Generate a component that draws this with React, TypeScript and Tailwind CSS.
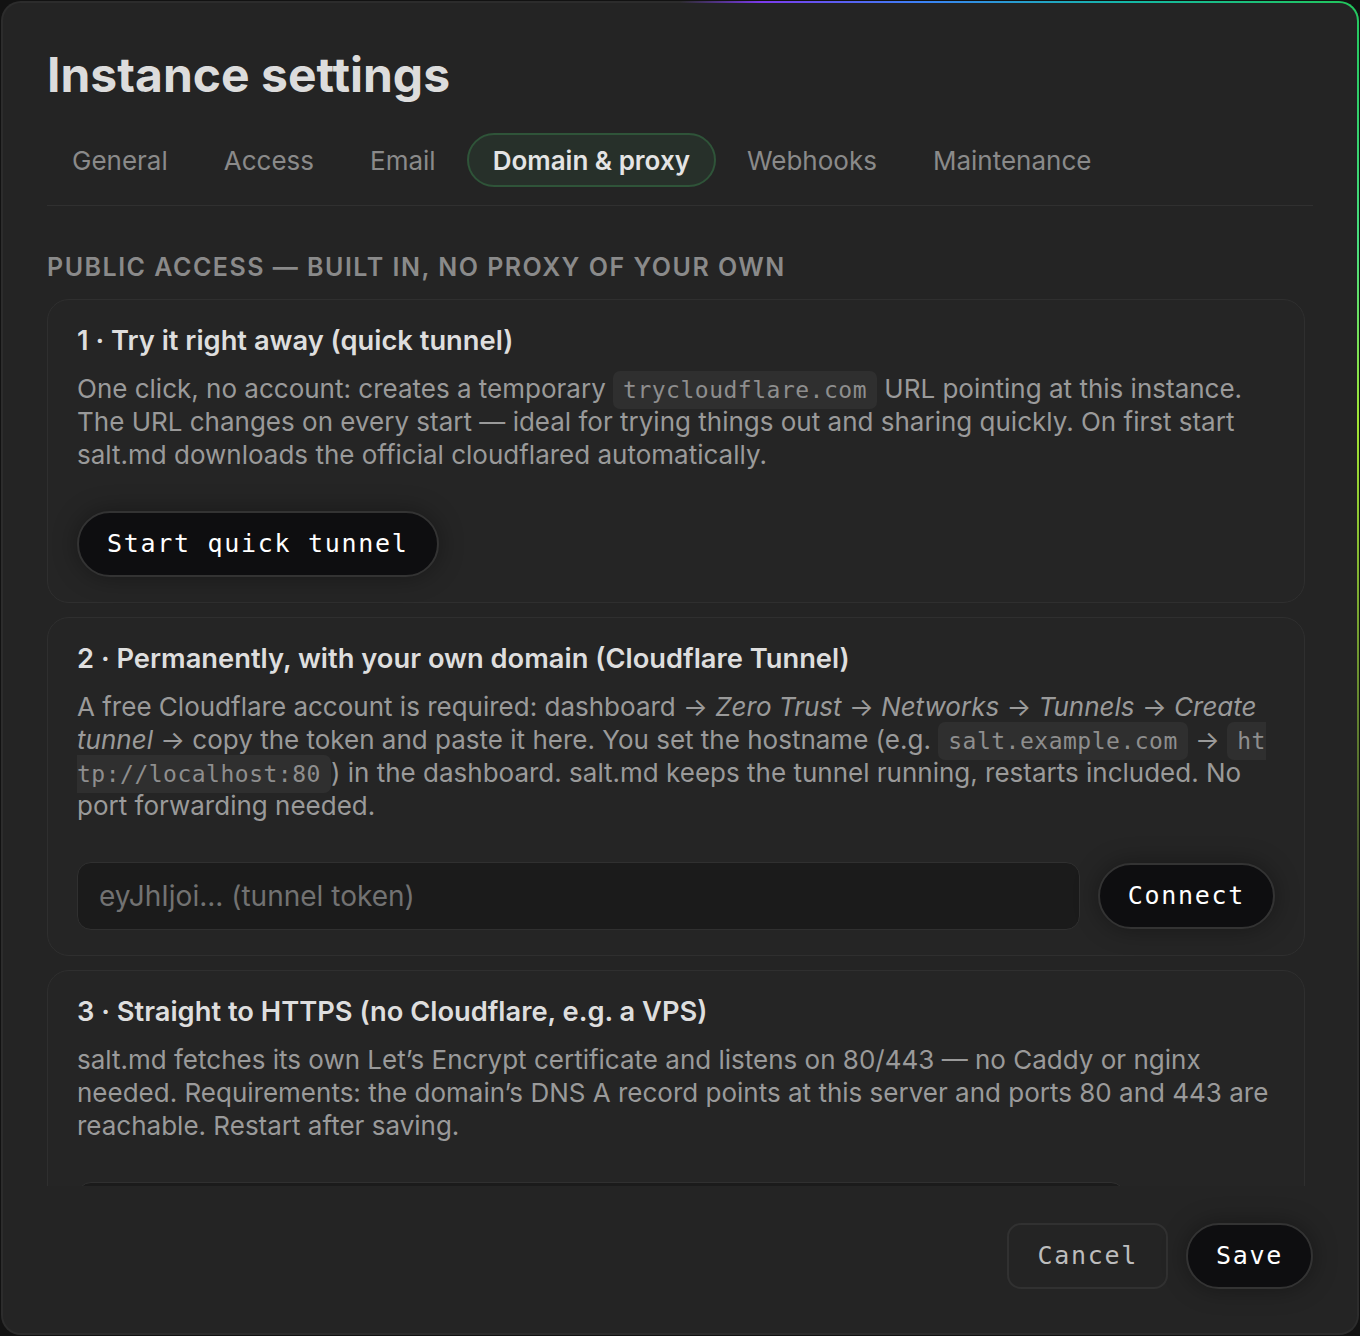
import { useState } from "react";

const tabs = ["General", "Access", "Email", "Domain & proxy", "Webhooks", "Maintenance"];

const mono = "font-['DejaVu_Sans_Mono','Liberation_Mono',monospace]";

function Code({ children, wrap }: { children: React.ReactNode; wrap?: boolean }) {
  return (
    <code
      className={`${mono} text-[23px] leading-[20px] tracking-[0.5px] text-[#8e8e8e] bg-[#2f2f2f] rounded-[7px] px-[10px] py-[6px] ${
        wrap ? "break-all" : "whitespace-nowrap"
      }`}
    >
      {children}
    </code>
  );
}

function DarkButton({ children }: { children: React.ReactNode }) {
  return (
    <button
      className={`${mono} h-[66px] shrink-0 rounded-full border-2 border-[#333] bg-[#0e0e10] px-[28px] text-[25px] tracking-[1.7px] text-white shadow-[0_0_24px_rgba(0,0,0,0.35)]`}
    >
      {children}
    </button>
  );
}

function Card({ title, children }: { title: string; children: React.ReactNode }) {
  return (
    <div className="rounded-[22px] border border-[#2f2f2f] bg-[#252525] px-[29px] pt-[23px] pb-[25px]">
      <h3 className="text-[27.3px] leading-[36px] font-semibold text-[#dedede]">{title}</h3>
      {children}
    </div>
  );
}

export default function App() {
  const [active, setActive] = useState("Domain & proxy");
  const [token, setToken] = useState("");

  return (
    <div className="w-[1360px] h-[1336px] bg-[#121212] p-px font-['Inter',sans-serif]">
      {/* gradient ring around the top-right of the dialog */}
      <div className="h-full rounded-[20px] p-[2px] bg-[conic-gradient(from_0deg_at_50%_50%,#2c2c2c_0deg,#7c3aed_7deg,#3b82f6_20deg,#14b8a6_34deg,#22c55e_45deg,#4ade80_58deg,#a3e635_70deg,#2c2c2c_115deg,#2c2c2c_360deg)]">
        <div className="flex h-full flex-col rounded-[18px] bg-[#242424]">
          <div className="px-[44px] pt-[44px]">
            <h1 className="text-[48px] leading-[56px] font-bold text-[#dcdcdc]">Instance settings</h1>
            <div className="mt-[30px] flex gap-[6px] border-b border-[#303030] pb-[18px]">
              {tabs.map((t) => (
                <button
                  key={t}
                  onClick={() => setActive(t)}
                  className={
                    t === active
                      ? "h-[54px] rounded-full border-2 border-[#2f5439] bg-[#27302a] px-[24px] text-[26px] font-semibold text-[#e4e4e4]"
                      : "h-[54px] rounded-full border-2 border-transparent px-[23px] text-[26px] text-[#8a8a8a]"
                  }
                >
                  {t}
                </button>
              ))}
            </div>
          </div>

          <div className="min-h-0 flex-1 overflow-hidden pl-[44px] pr-[52px]">
            <h2 className="mt-[46px] text-[25px] leading-[30px] font-semibold tracking-[0.06em] text-[#8a8a8a]">
              PUBLIC ACCESS — BUILT IN, NO PROXY OF YOUR OWN
            </h2>

            <div className="mt-[17px] flex flex-col gap-[14px]">
              <Card title="1 · Try it right away (quick tunnel)">
                <p className="mt-[13px] text-[26px] leading-[33px] text-[#9a9a9a]">
                  One click, no account: creates a temporary <Code>trycloudflare.com</Code> URL pointing at this
                  instance. The URL changes on every start — ideal for trying things out and sharing quickly. On
                  first start salt.md downloads the official cloudflared automatically.
                </p>
                <div className="mt-[40px]">
                  <DarkButton>Start quick tunnel</DarkButton>
                </div>
              </Card>

              <Card title="2 · Permanently, with your own domain (Cloudflare Tunnel)">
                <p className="mt-[13px] text-[26px] leading-[33px] text-[#9a9a9a]">
                  A free Cloudflare account is required: dashboard → <em>Zero Trust</em> → <em>Networks</em> →{" "}
                  <em>Tunnels</em> → <em>Create tunnel</em> → copy the token and paste it here. You set the
                  hostname (e.g. <Code>salt.example.com</Code> → <Code wrap>http://localhost:80</Code>) in the
                  dashboard. salt.md keeps the tunnel running, restarts included. No port forwarding needed.
                </p>
                <div className="mt-[40px] flex items-center gap-[18px]">
                  <input
                    value={token}
                    onChange={(e) => setToken(e.target.value)}
                    placeholder="eyJhIjoi... (tunnel token)"
                    className="h-[68px] min-w-0 flex-1 rounded-[14px] border border-[#303030] bg-[#1b1b1b] px-[21px] text-[28px] text-[#cfcfcf] placeholder:text-[#727272] outline-none"
                  />
                  <DarkButton>Connect</DarkButton>
                </div>
              </Card>

              <Card title="3 · Straight to HTTPS (no Cloudflare, e.g. a VPS)">
                <p className="mt-[13px] text-[26px] leading-[33px] text-[#9a9a9a]">
                  salt.md fetches its own Let’s Encrypt certificate and listens on 80/443 — no Caddy or nginx
                  needed. Requirements: the domain’s DNS A record points at this server and ports 80 and 443 are
                  reachable. Restart after saving.
                </p>
                <div className="mt-[40px] flex items-center gap-[18px]">
                  <input
                    placeholder="salt.example.com"
                    className="h-[68px] w-[1048px] rounded-[14px] border border-[#303030] bg-[#1b1b1b] px-[21px] text-[28px] text-[#cfcfcf] placeholder:text-[#727272] outline-none"
                  />
                </div>
              </Card>
            </div>
          </div>

          <div className="flex justify-end gap-[18px] px-[44px] pt-[37px] pb-[44px]">
            <button
              className={`${mono} h-[66px] rounded-[14px] border-2 border-[#313131] px-[28px] text-[25px] tracking-[1.7px] text-[#bdbdbd]`}
            >
              Cancel
            </button>
            <DarkButton>Save</DarkButton>
          </div>
        </div>
      </div>
    </div>
  );
}
